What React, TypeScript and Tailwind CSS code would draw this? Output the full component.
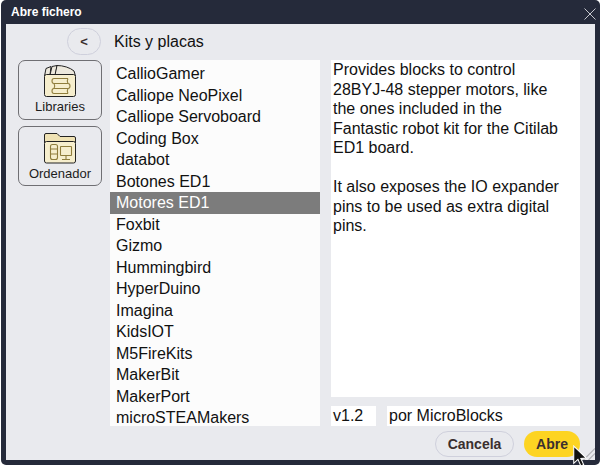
const items = ["CallioGamer","Calliope NeoPixel","Calliope Servoboard","Coding Box","databot","Botones ED1","Motores ED1","Foxbit","Gizmo","Hummingbird","HyperDuino","Imagina","KidsIOT","M5FireKits","MakerBit","MakerPort","microSTEAMakers"];

function LibrariesIcon() {
  return (
    <svg width="32" height="32" viewBox="1 1 32 32" fill="none" stroke="#222" strokeWidth="1">
      <path d="M1.5 12 L3 4.5 L8 2.5 L7 11 Z" fill="#ece8dc" />
      <path d="M7 11 L9 2.5 L14 1.5 L12.5 11 Z" fill="#ece8dc" />
      <path d="M12 11 L14 1.5 C20 1.5 27 3.5 31 7 L32.5 12 Z" fill="#ece8dc" />
      <rect x="1.5" y="10.5" width="31" height="22" rx="2" fill="#f6eecd" />
      <g stroke="#8f7d3c" strokeWidth="1.1" fill="none">
        <path d="M25 14.5 H11 Q9 14.5 9 17 Q9 19.5 11 19.5 H25 M25 14.5 Q23.5 17 25 19.5" />
        <path d="M11 19.5 H25 Q27 19.5 27 22 Q27 24.5 25 24.5 H11 M11 19.5 Q12.5 22 11 24.5" />
        <path d="M25 24.5 H11 Q9 24.5 9 27 Q9 29.5 11 29.5 H25 M25 24.5 Q23.5 27 25 29.5" />
      </g>
    </svg>
  );
}

function OrdenadorIcon() {
  return (
    <svg width="32" height="31" viewBox="1 1 32 31" fill="none" stroke="#222" strokeWidth="1">
      <path d="M1.5 11 V3 Q1.5 1.5 3 1.5 H14 L17 4.5 H31 Q32.5 4.5 32.5 6 V11 Z" fill="#efe2b4" />
      <rect x="1.5" y="9.5" width="31" height="21.5" rx="2" fill="#f6eecd" />
      <g stroke="#8f7d3c" fill="none" strokeWidth="1.1">
        <rect x="7.5" y="12.5" width="7" height="15" rx="2" />
        <path d="M7.5 17 H14.5 M7.5 22 H14.5" />
        <rect x="17.5" y="14.5" width="11" height="9" rx="0.5" />
        <path d="M23 23.5 V27.5 M19 27.5 H27" />
      </g>
    </svg>
  );
}

export default function App() {
  return (
    <div className="w-[601px] h-[467px] bg-white font-['Liberation_Sans',Arial,sans-serif] overflow-hidden">
      <div className="relative w-[599px] h-[465px] ml-px bg-[#252a3a] rounded-[5px] flex flex-col pl-[5px] pr-[5px] pb-[5px]">
        <div className="h-6 shrink-0 flex items-center justify-between pl-[5px] pr-0">
          <span className="text-white font-bold text-[12px] leading-none">Abre fichero</span>
          <svg width="12" height="12" viewBox="0 0 12 12" className="mr-[-1px] mt-[3px]" stroke="#d8d8dc" strokeWidth="0.9" fill="none">
            <path d="M0.5 0.5 L11.5 11.5 M11.5 0.5 L0.5 11.5" />
          </svg>
        </div>
        <div className="flex-1 bg-[#e9eaee] relative flex flex-col pr-[15px]">
          <div className="flex items-center h-[36px] shrink-0">
            <div className="ml-[61px] mt-[-1px] w-[34px] h-[27px] rounded-full border border-[#cfd0dc] flex items-center justify-center text-[#3a2f2f] font-bold text-[13px] leading-none">&lt;</div>
            <span className="ml-[13px] text-[16px] text-[#111] leading-none mt-[-1px]">Kits y placas</span>
          </div>
          <div className="flex flex-1 min-h-0">
            <div className="w-[104px] shrink-0 pl-3 flex flex-col gap-[6px]">
              <div className="w-[84px] h-[60px] rounded-[7px] border border-[#6f6f73] flex flex-col items-center">
                <div className="mt-[4px] h-[32px]">
                  <LibrariesIcon />
                </div>
                <span className="text-[13px] leading-none mt-[3px] text-[#1c1c1c]">Libraries</span>
              </div>
              <div className="w-[84px] h-[60px] rounded-[7px] border border-[#6f6f73] flex flex-col items-center">
                <div className="mt-[6px] h-[31px]">
                  <OrdenadorIcon />
                </div>
                <span className="text-[13px] leading-none mt-[3px] text-[#1c1c1c]">Ordenador</span>
              </div>
            </div>
            <div className="w-[210px] h-[366px] shrink-0 bg-[#fcfcfc] overflow-hidden pt-[3px]">
              {items.map((t) => (
                <div key={t} className={`h-[21.5px] leading-[21.5px] pl-[6px] text-[16px] whitespace-nowrap ${t === "Motores ED1" ? "bg-[#7c7c7c] text-white" : "text-[#111]"}`}>{t}</div>
              ))}
            </div>
            <div className="w-[249px] ml-[11px] shrink-0 flex flex-col">
              <div className="h-[337px] bg-white px-[2px] text-[16px] leading-[19.5px] text-[#111]">
                <p>Provides blocks to control<br />28BYJ-48 stepper motors, like<br />the ones included in the<br />Fantastic robot kit for the Citilab<br />ED1 board.</p>
                <p className="mt-[19.5px]">It also exposes the IO expander<br />pins to be used as extra digital<br />pins.</p>
              </div>
              <div className="flex mt-[9px] h-5 text-[16px] leading-5 text-[#111]">
                <div className="w-[45px] bg-white pl-[2px]">v1.2</div>
                <div className="ml-[11px] flex-1 bg-white pl-[2px]">por MicroBlocks</div>
              </div>
              <div className="flex justify-end gap-[10px] mt-[5px]">
                <div className="w-[79px] h-[26px] rounded-full border border-[#cfd0dc] flex items-center justify-center font-bold text-[14px] text-[#3a2f2f]">Cancela</div>
                <div className="w-[56px] h-[26px] rounded-full bg-[#fdd422] flex items-center justify-center font-bold text-[14px] text-[#3a2f2f]">Abre</div>
              </div>
            </div>
          </div>
          <svg width="12" height="12" viewBox="0 0 12 12" className="absolute right-0 bottom-0" stroke="#b4b4b8" strokeWidth="1.2" fill="none">
            <path d="M12 0.5 L0.5 12 M12 5.5 L5.5 12" />
          </svg>
        </div>
        <svg width="15" height="22" viewBox="0 0 14 21" className="absolute left-[571px] top-[445px]">
          <path d="M1.5 1 V17.5 L5.5 13.7 L8.3 20 L11 18.8 L8.3 12.8 L13.5 12.5 Z" fill="#111" stroke="#fff" strokeWidth="1" />
        </svg>
      </div>
    </div>
  );
}
